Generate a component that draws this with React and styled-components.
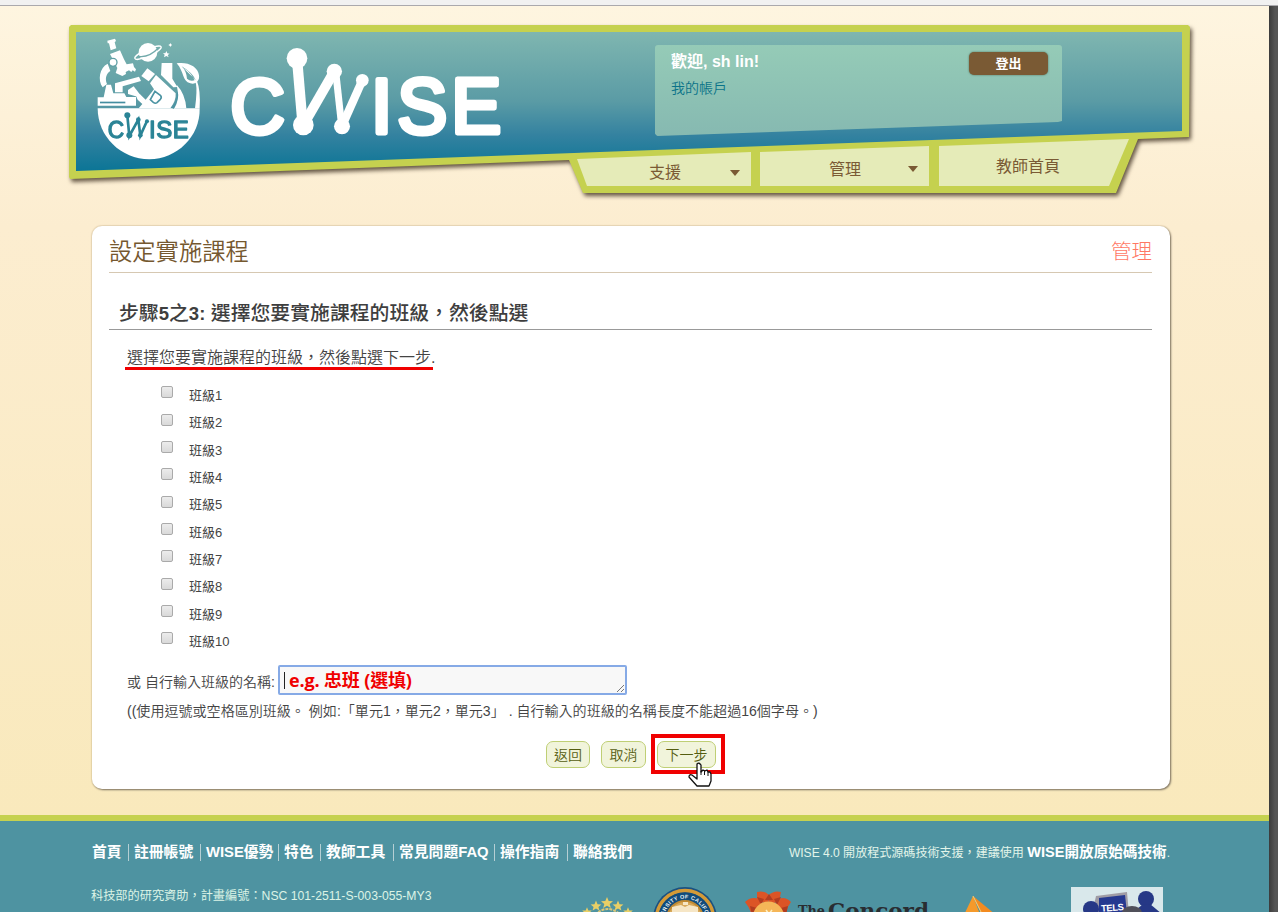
import React from "react";
import styled, { createGlobalStyle, css } from "styled-components";

const lime = "#c5d14f";
const brown = "#7a5a34";
const sans = `"Liberation Sans", "Noto Sans CJK TC", sans-serif`;

const GlobalStyle = createGlobalStyle`
  * { box-sizing: border-box; }
  body { margin: 0; font-family: ${sans}; color: #444; overflow: hidden; }
`;

const Screen = styled.div`
  height: 912px;
  overflow: hidden;
  display: flex;
  flex-direction: column;
`;
const TopStrip = styled.div`
  height: 6px;
  flex: none;
  background: #f1f1f1;
  border-bottom: 1px solid #aaa9ad;
`;
const Viewport = styled.div`
  display: flex;
  flex: 1;
  min-height: 0;
  background: linear-gradient(90deg, #3b3b3b 1269px, #555 1275px);
`;
const Page = styled.div`
  width: 1269px;
  overflow: hidden;
  background: linear-gradient(#fef5e0, #fcedd0 220px, #f9e9bc 809px);
`;

/* Banner */
const Header = styled.header`
  margin: 19px 0 0 69px;
  width: 1121px;
  height: 169px;
  filter: drop-shadow(2px 3px 2px rgba(50, 35, 20, 0.75));
`;
const BannerShape = styled.div`
  height: 169px;
  padding: 7px 8px 0 7px;
  background: ${lime};
  clip-path: polygon(0 2px, 2px 0, 1119px 0, 1121px 2px, 1120px 112px, 1069px 114px, 1047px 168px, 514px 168px, 500px 135px, 1px 154px, 0 152px);
`;
const Banner = styled.div`
  height: 139px;
  display: flex;
  justify-content: space-between;
  padding-right: 120px;
  background: linear-gradient(#7fb6b0, #5a9ba5 50%, #3482a0 74%, #0b7596);
  clip-path: polygon(0 0, 100% 0, 100% 99px, 0 139px);
`;
const Account = styled.div`
  width: 407px;
  height: 91px;
  margin-top: 13px;
  padding: 7px 14px 0 16px;
  display: flex;
  justify-content: space-between;
  border-radius: 3px;
  background: linear-gradient(#95cbb7, #86b9b1);
  clip-path: polygon(0 0, 100% 0, 100% 76px, 99% 77px, 2px 91px, 0 89px);
`;
const Welcome = styled.div`
  font-weight: bold;
  font-size: 16px;
  line-height: 20px;
  color: #fff;
`;
const AccountLink = styled.a`
  display: block;
  margin-top: 7px;
  font-size: 14px;
  line-height: 18px;
  color: #0b7389;
  font-weight: 350;
`;
const Logout = styled.button`
  width: 79px;
  height: 23px;
  border: 0;
  border-radius: 5px;
  padding: 0;
  background: ${brown};
  box-shadow: 0 0 2px #4e6a55;
  color: #fff;
  font: bold 13px/22px ${sans};
`;
const Nav = styled.nav`
  display: flex;
  margin: -32px 0 0 501px;
  height: 47px;
`;
const Tab = styled.div`
  position: relative;
  width: ${(p) => p.$w}px;
  margin-right: ${(p) => p.$gap || 0}px;
  padding-top: ${(p) => p.$top}px;
  padding-left: ${(p) => p.$pad}px;
  font-size: 16px;
  line-height: 24px;
  color: ${brown};
  background: #e5ebb8;
  clip-path: ${(p) => p.$shape};
`;
const Caret = styled.i`
  position: absolute;
  right: 11px;
  top: ${(p) => p.$top}px;
  border: 5px solid transparent;
  border-top: 6px solid ${brown};
  border-bottom: 0;
`;

/* Main card */
const Card = styled.main`
  margin: 32px 0 0 92px;
  width: 1078px;
  height: 563px;
  padding: 0 18px 0 17px;
  border-radius: 10px;
  background: #fff;
  box-shadow: 0 0 1px 1px rgba(170, 140, 90, 0.2), 1px 1px 2px 0 #777064;
`;
const TitleRow = styled.div`
  height: 47px;
  padding-top: 6px;
  display: flex;
  justify-content: space-between;
  align-items: center;
  border-bottom: 1px solid #d6c8b2;
`;
const Title = styled.h1`
  margin: 0;
  font-size: 23.3px;
  line-height: 30px;
  font-weight: 350;
  color: #75582f;
`;
const Section = styled.span`
  font-size: 20.5px;
  line-height: 30px;
  font-weight: 300;
  color: #ff7864;
`;
const StepTitle = styled.h2`
  margin: 0;
  height: 57px;
  padding: 27px 0 0 10px;
  font-size: 19.85px;
  line-height: 26px;
  font-weight: 500;
  white-space: nowrap;
  border-bottom: 1px solid #999;
  color: #3e3e3e;
  b { font-size: 18.5px; }
`;
const Instruction = styled.p`
  margin: 16px 0 0 16px;
  width: 308px;
  height: 24px;
  padding-left: 2px;
  border-bottom: 3px solid #f00000;
  font-size: 16px;
  line-height: 24px;
  font-weight: 350;
  white-space: nowrap;
`;
const PeriodList = styled.ul`
  list-style: none;
  margin: 12px 0 0 52px;
  padding: 0;
`;
const Period = styled.li`
  display: flex;
  height: 27.35px;
  gap: 16px;
  font-size: 13px;
  line-height: 27px;
`;
const Box = styled.span`
  flex: none;
  width: 12px;
  height: 12px;
  margin-top: 4.4px;
  border: 1px solid #aaa;
  border-radius: 2px;
  background: linear-gradient(#ececec, #d9d9d9);
`;
const CustomRow = styled.div`
  display: flex;
  height: 30px;
  margin: 10px 0 0 18px;
  font-size: 14px;
  line-height: 34px;
  font-weight: 350;
  white-space: nowrap;
`;
const CustomLabel = styled.span`
  width: 151px;
`;
const NameField = styled.div`
  width: 349px;
  height: 30px;
  position: relative;
  display: flex;
  align-items: center;
  padding-left: 4px;
  border: 2px solid #86aae6;
  border-radius: 2px;
  background: #f8f8f8;
  color: #f00000;
  font: bold 18px/24px "Open Sans", "Noto Sans CJK TC", sans-serif;
`;
const NameValue = styled.span`
  letter-spacing: -0.15px;
`;
const TextCaret = styled.i`
  width: 1px;
  height: 17px;
  margin-right: 4px;
  background: #222;
`;
const Grip = styled.svg`
  position: absolute;
  right: 0;
  bottom: 0;
`;
const Hint = styled.p`
  margin: 6px 0 0 18px;
  font-size: 14.05px;
  line-height: 20px;
  font-weight: 350;
  white-space: nowrap;
`;
const Actions = styled.div`
  display: flex;
  gap: 11px;
  margin: 20px 0 0 437px;
`;
const Action = styled.button`
  position: relative;
  width: ${(p) => p.$w}px;
  height: 27px;
  padding: 0;
  border: 1px solid #bfcf75;
  border-radius: 7px;
  background: #f1f4db;
  color: #555d10;
  font: 350 14px/24px ${sans};
  ${(p) =>
    p.$marked &&
    css`
      &::after {
        content: "";
        position: absolute;
        inset: -8px -10px -7px -7px;
        border: 4px solid #f00000;
      }
    `}
`;
const Pointer = styled.svg`
  position: absolute;
  z-index: 1;
  left: 29px;
  top: 19px;
`;

/* Footer */
const Footer = styled.footer`
  margin-top: 26px;
  height: 120px;
  padding: 0 99px 0 91px;
  border-top: 6px solid ${lime};
  background: #4e93a1;
  color: #fff;
`;
const FooterTop = styled.div`
  display: flex;
  justify-content: space-between;
  padding-top: 23px;
  height: 42px;
  white-space: nowrap;
`;
const Links = styled.div`
  display: flex;
`;
const FootLink = styled.a`
  width: ${(p) => p.$w}px;
  height: 17px;
  padding-left: ${(p) => (p.$first ? 1 : 5)}px;
  border-left: ${(p) => (p.$first ? 0 : 1)}px solid #b5cfd4;
  font-size: 14.8px;
  font-weight: bold;
  line-height: 17px;
`;
const Credit = styled.div`
  font-size: 12.05px;
  line-height: 17px;
  color: #e3f5ea;
  b { font-size: 14.6px; color: #fff; }
`;
const FooterBottom = styled.div`
  display: flex;
  justify-content: space-between;
`;
const Grant = styled.div`
  padding-top: 24px;
  font-size: 12.2px;
  line-height: 18px;
  white-space: nowrap;
  color: #dcf3e6;
`;
const Partners = styled.svg`
  margin-right: 5px;
  flex: none;
`;

function Logo() {
  return (
    <svg width="440" height="139" viewBox="76 32 440 139" fill="#fff">
      <g transform="translate(60 0) scale(.33333)">
        <path d="M113 325H419C421 410 350 478 268 478C183 478 113 410 113 325Z" />
        <path d="M142 122L165 116L168 123L164 127L169 145L152 151L147 130L143 130Z" />
        <path d="M150 162L180 151L192 178L200 193L219 190L222 201L228 208L225 215L218 211L214 216L207 211L197 216L198 222L187 228L167 219L172 204Z" />
        <circle cx="159" cy="187" r="12" stroke="#60a0a6" strokeWidth="4" />
        <path d="M143 191C119 203 112 240 128 262L141 252C134 235 139 221 151 213Z" />
        <path d="M165 250L237 230L243 243L188 259V277H165Z" />
        <path d="M139 254H153L160 280H193L199 291H228V317H113V292H131Z" />
        <path d="M204 270L221 259L244 289H227L204 282Z" />
        <rect x="120" y="305" width="76" height="5" fill="#438da0" />
        <circle cx="264" cy="157" r="28" />
        <ellipse cx="264" cy="158" rx="43" ry="10" transform="rotate(-24 264 158)" fill="none" stroke="#fff" strokeWidth="4" />
        <path d="M235 169Q267 174 295 144" fill="none" stroke="#72aaab" strokeWidth="4" />
        <path d="M319 153L322 160L329 161L323 165L326 172L319 168L312 172L314 164L309 159L316 160Z" />
        <path d="M331 129L333 133L337 135L333 137L331 141L329 137L325 135L329 133Z" />
        <path d="M262 205L285 222L266 244L244 228Z" />
        <path d="M288 225L347 280Q349 301 331 325H236L247 312L233 299L228 287L240 283L257 299L282 268L270 250Z" />
        <path d="M305 189H337V236L352 261L340 262L303 225Z" />
        <path d="M285 274L302 287Q306 292 301 298L291 308Q286 312 280 307L271 299Z" fill="#fff" stroke="#4c94a3" strokeWidth="5" />
        <path d="M353 275Q356 303 338 325" fill="none" stroke="#4c94a3" strokeWidth="6" />
        <path d="M350 254Q376 282 379 325H343Q359 296 353 272Z" />
        <path d="M350 190C381 184 415 199 417 226C420 244 405 255 391 250C366 244 374 217 350 190Z" />
        <path d="M365 199Q395 217 407 239Q392 246 381 236Q379 213 365 199Z" fill="#67a5a8" />
        <path d="M367 202Q399 220 408 252Q412 272 405 325H419Q422 270 411 243Z" />
        <g fill="#2a8496" fontFamily="Liberation Sans" fontSize="72" stroke="#2a8496" strokeWidth="4" strokeLinejoin="round">
          <text x="143" y="414" textLength="49" lengthAdjust="spacingAndGlyphs">C</text>
          <text x="267" y="414" textLength="119">ISE</text>
        </g>
        <path d="M202 347L208 408L235 359L241 407L261 363" stroke="#2a8496" strokeWidth="8" fill="none" />
        <g fill="#2a8496"><circle cx="202" cy="346" r="9" /><circle cx="235" cy="359" r="7" /><circle cx="261" cy="364" r="6" /><circle cx="208" cy="406" r="9" /><circle cx="241" cy="406" r="7" /></g>
      </g>
      <g transform="translate(220 30) scale(.33333)">
        <g fontFamily="Liberation Sans" fontSize="235" stroke="#fff" strokeWidth="15" strokeLinejoin="round">
          <text x="31" y="308" textLength="164" lengthAdjust="spacingAndGlyphs">C</text>
          <text x="452" y="308">I</text>
          <text x="532" y="308" textLength="150" lengthAdjust="spacingAndGlyphs">S</text>
          <text x="694" y="308" textLength="150" lengthAdjust="spacingAndGlyphs">E</text>
        </g>
        <g stroke="#fff" fill="none">
          <path d="M231 85L248 285" strokeWidth="31" />
          <path d="M250 285L343 124" strokeWidth="30" />
          <path d="M347 124L365 288" strokeWidth="21" />
          <path d="M366 288L427 151" strokeWidth="25" />
        </g>
        <circle cx="231" cy="85" r="31" /><circle cx="343" cy="124" r="23" /><circle cx="427" cy="151" r="19" />
        <circle cx="250" cy="285" r="31" /><circle cx="366" cy="289" r="24" />
      </g>
    </svg>
  );
}

const star = "M0-6L1.7-2L6-1.8L2.7 1L3.8 5L0 2.8L-3.8 5L-2.7 1L-6-1.8L-1.7-2Z";

function PartnerLogos() {
  return (
    <Partners width="590" height="60" viewBox="575 863 590 60">
      <g fill="#e9cf66">
        <path d={star} transform="translate(607 903)" />
        <path d={star} transform="translate(596 906) scale(.9)" />
        <path d={star} transform="translate(618 906) scale(.9)" />
        <path d={star} transform="translate(587 912) scale(.8)" />
        <path d={star} transform="translate(628 912) scale(.8)" />
        <path d="M595 915Q607 903 621 915" fill="none" stroke="#d9c777" strokeWidth="2" strokeDasharray="3 1" />
      </g>
      <circle cx="685" cy="919" r="32" fill="#1b5180" />
      <circle cx="685" cy="919" r="28.500" fill="none" stroke="#d49a37" strokeWidth="3.500" />
      <circle cx="685" cy="919" r="26.500" fill="#124b7b" />
      <circle cx="685" cy="919" r="18" fill="#d7a85a" stroke="#c18a32" strokeWidth="2" />
      <path d="M672 912V907L681 905L685 907L689 905L698 907V912ZM683 902H688V905H683Z" fill="#f6e6c6" />
      <path id="sealArc" d="M666.500 929.500A21 21 0 1 1 703.500 929.500" fill="none" />
      <text fontFamily="Liberation Sans" fontWeight="bold" fontSize="5.500" fill="#e7f1f3">
        <textPath href="#sealArc" textLength="86">UNIVERSITY OF CALIFORNIA</textPath>
      </text>
      <g fill="#dc5426">
        <path d="M745 902Q751 896 759 899L764 908L752 916Q750 908 745 902Z" />
        <path d="M757 892Q764 890 769 895L768 904L757 901Z" />
        <path d="M769 895Q774 890 781 892L779 902L768 904Z" />
        <path d="M779 899Q785 896 791 902Q786 908 786 916L774 908Z" />
      </g>
      <path d="M757 897L764 899L761 905ZM769 894L773 900L765 900ZM781 897L774 899L777 905ZM750 906L757 908L752 915ZM788 906L781 908L786 915Z" fill="#b23c20" />
      <circle cx="768.500" cy="917" r="15.500" fill="#f5b658" />
      <path d="M766 910L769 914L772 910M769 914V917" stroke="#ffefc0" strokeWidth="1.500" fill="none" />
      <g fontFamily="DejaVu Serif" fontWeight="bold" fill="#292d31">
        <text x="798" y="916" fontSize="14" textLength="27" lengthAdjust="spacingAndGlyphs">The</text>
        <text x="828" y="918" fontSize="20" textLength="101" lengthAdjust="spacingAndGlyphs">Concord</text>
      </g>
      <path d="M973 896L963 917H981Z" fill="#f59a2b" /><path d="M973 896L996 915H982Z" fill="#f38b20" />
      <path d="M973 896L982 914" stroke="#f8cf79" />
      <rect x="1071" y="887" width="92" height="30" fill="#d9e8eb" />
      <path d="M1096 896L1127 892L1129 914H1092Z" fill="#9f9ca5" />
      <path d="M1099 898L1125 895L1127 913H1099Z" fill="#253990" />
      <g fill="#263886"><circle cx="1091" cy="909" r="8" /><circle cx="1146" cy="899" r="8" /><path d="M1142 905L1150 904L1162 914H1136L1137 909Z" /></g>
      <ellipse cx="1132" cy="913" rx="10" ry="7" fill="#50505a" />
      <text x="1101" y="911" fontFamily="Liberation Sans" fontWeight="bold" fontSize="9.500" fill="#fff" textLength="23" transform="rotate(-4 1112 908)">TELS</text>
    </Partners>
  );
}

const footLinks = [
  ["首頁", 37], ["註冊帳號", 72], ["WISE優勢", 78], ["特色", 42],
  ["教師工具", 73], ["常見問題FAQ", 101], ["操作指南", 73], ["聯絡我們", 72],
];

export default function App() {
  return (
    <Screen>
      <GlobalStyle />
      <TopStrip />
      <Viewport>
        <Page>
          <Header>
            <BannerShape>
              <Banner>
                <Logo />
                <Account>
                  <div>
                    <Welcome>歡迎, sh lin!</Welcome>
                    <AccountLink>我的帳戶</AccountLink>
                  </div>
                  <Logout>登出</Logout>
                </Account>
              </Banner>
              <Nav>
                <Tab $w={174} $gap={9} $top={22} $pad={72} $shape="polygon(0 20px, 100% 13px, 100% 100%, 10px 100%)">
                  支援<Caret $top={31} />
                </Tab>
                <Tab $w={169} $gap={10} $top={19} $pad={69} $shape="polygon(0 13px, 100% 7px, 100% 100%, 0 100%)">
                  管理<Caret $top={27} />
                </Tab>
                <Tab $w={190} $top={16} $pad={57} $shape="polygon(0 7px, 100% 0, 170px 100%, 0 100%)">
                  教師首頁
                </Tab>
              </Nav>
            </BannerShape>
          </Header>

          <Card>
            <TitleRow>
              <Title>設定實施課程</Title>
              <Section>管理</Section>
            </TitleRow>
            <StepTitle>步驟<b>5</b>之<b>3:</b> 選擇您要實施課程的班級，然後點選</StepTitle>
            <Instruction>選擇您要實施課程的班級，然後點選下一步.</Instruction>
            <PeriodList>
              {Array.from({ length: 10 }, (_, i) => (
                <Period key={i}>
                  <Box />
                  <span>班級{i + 1}</span>
                </Period>
              ))}
            </PeriodList>
            <CustomRow>
              <CustomLabel>或 自行輸入班級的名稱:</CustomLabel>
              <NameField>
                <TextCaret />
                <NameValue>e.g. 忠班 (選填)</NameValue>
                <Grip width="9" height="9" stroke="#777">
                  <path d="M1 8L8 1M5 8L8 5" />
                </Grip>
              </NameField>
            </CustomRow>
            <Hint>((使用逗號或空格區別班級。 例如:「單元1，單元2，單元3」 . 自行輸入的班級的名稱長度不能超過16個字母。)</Hint>
            <Actions>
              <Action $w={44}>返回</Action>
              <Action $w={45}>取消</Action>
              <Action $w={59} $marked>
                下一步
                <Pointer width="26" height="28" viewBox="0 0 26 28">
                  <path d="M10 3Q12 1 14 4V11L16 9L18 10L20 9L21 11L23 11L24 13V20L22 25H10L2 16Q2 13 5 14L10 18Z" fill="#fff" stroke="#111" strokeWidth="1.3" strokeLinejoin="round" />
                  <path d="M14 10V14M17.500 10V14M21 11V15" stroke="#111" fill="none" />
                </Pointer>
              </Action>
            </Actions>
          </Card>

          <Footer>
            <FooterTop>
              <Links>
                {footLinks.map(([label, w], i) => (
                  <FootLink key={label} $w={w} $first={i === 0}>{label}</FootLink>
                ))}
              </Links>
              <Credit>WISE 4.0 開放程式源碼技術支援，建議使用 <b>WISE開放原始碼技術</b>.</Credit>
            </FooterTop>
            <FooterBottom>
              <Grant>科技部的研究資助，計畫編號：NSC 101-2511-S-003-055-MY3</Grant>
              <PartnerLogos />
            </FooterBottom>
          </Footer>
        </Page>
      </Viewport>
    </Screen>
  );
}
